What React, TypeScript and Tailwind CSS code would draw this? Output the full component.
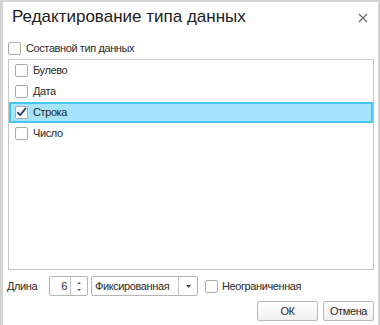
import React from "react";

const T = "text-[11px] tracking-[-0.4px] text-[#2b2b2b]";

function Box({ checked = false }: { checked?: boolean }) {
  return (
    <div className="w-[13px] h-[13px] shrink-0 rounded-[2px] border border-[#ababab] bg-white flex items-center justify-center">
      {checked && (
        <svg width="13" height="13" viewBox="0 0 13 13" className="-mt-[1px]">
          <path d="M2.2 6.6 L5 9.6 L11.2 1.8" fill="none" stroke="#1d3f73" strokeWidth="2.1" strokeLinecap="round" strokeLinejoin="round" />
        </svg>
      )}
    </div>
  );
}

function Row({ label, selected = false }: { label: string; selected?: boolean }) {
  return (
    <div
      className={
        "h-[21px] flex items-center gap-[5px] " +
        (selected ? "bg-[#a5e4fb] border-2 border-[#48c5f1] pl-[4px]" : "pl-[6px]")
      }
    >
      <Box checked={selected} />
      <span className={T}>{label}</span>
    </div>
  );
}

export default function App() {
  return (
    <div className="w-[380px] h-[325px] overflow-hidden bg-[#d4d4d4] pl-[3px] pt-[2px] pr-[2px] font-['Liberation_Sans',Arial,sans-serif]">
      <div className="h-full bg-white flex flex-col">
        <div className="mt-[6px] h-[18px] flex items-center justify-between pl-[9px] pr-[10px]">
          <span className="text-[17px] leading-[18px] text-[#222]">Редактирование типа данных</span>
          <svg width="10" height="10" viewBox="0 0 10 10" className="mt-[1px]">
            <path d="M1 1 L9 9 M9 1 L1 9" stroke="#6a6a6a" strokeWidth="1.2" />
          </svg>
        </div>

        <div className="mt-[16px] ml-[5px] h-[13px] flex items-center gap-[5px]">
          <Box />
          <span className={T}>Составной тип данных</span>
        </div>

        <div className="mt-[4px] ml-[5px] mr-[4px] h-[211px] border border-[#c6c6c6] flex flex-col">
          <Row label="Булево" />
          <Row label="Дата" />
          <Row label="Строка" selected />
          <Row label="Число" />
        </div>

        <div className="mt-[6px] h-[20px] flex items-center pl-[4px]">
          <span className={"w-[42px] " + T}>Длина</span>
          <div className="w-[39px] h-[20px] border border-[#b5b5b5] rounded-[2px] flex">
            <div className={"flex-1 flex items-center justify-end pr-[3px] " + T}>6</div>
            <div className="w-[17px] border-l border-[#c8c8c8] flex flex-col items-center justify-center gap-[5px]">
              <svg width="4" height="2" viewBox="0 0 4 2"><path d="M0 2 L2 0 L4 2 Z" fill="#555" /></svg>
              <svg width="4" height="2" viewBox="0 0 4 2"><path d="M0 0 L4 0 L2 2 Z" fill="#555" /></svg>
            </div>
          </div>
          <div className="ml-[3px] w-[107px] h-[20px] border border-[#b5b5b5] rounded-[2px] flex">
            <div className={"flex-1 flex items-center pl-[3px] " + T}>Фиксированная</div>
            <div className="w-[19px] border-l border-[#c8c8c8] flex items-center justify-center">
              <svg width="5" height="3" viewBox="0 0 5 3"><path d="M0 0 L5 0 L2.5 3 Z" fill="#444" /></svg>
            </div>
          </div>
          <div className="ml-[7px] flex items-center gap-[4px]">
            <Box />
            <span className={T}>Неограниченная</span>
          </div>
        </div>

        <div className="mt-[5px] flex justify-end gap-[5px] mr-[4px]">
          <button className={"w-[61px] h-[20px] border border-[#b8b8b8] rounded-[2px] bg-gradient-to-b from-white to-[#f0f0f0] " + T}>ОК</button>
          <button className={"w-[51px] h-[20px] border border-[#b8b8b8] rounded-[2px] bg-gradient-to-b from-white to-[#f0f0f0] " + T}>Отмена</button>
        </div>
      </div>
    </div>
  );
}
